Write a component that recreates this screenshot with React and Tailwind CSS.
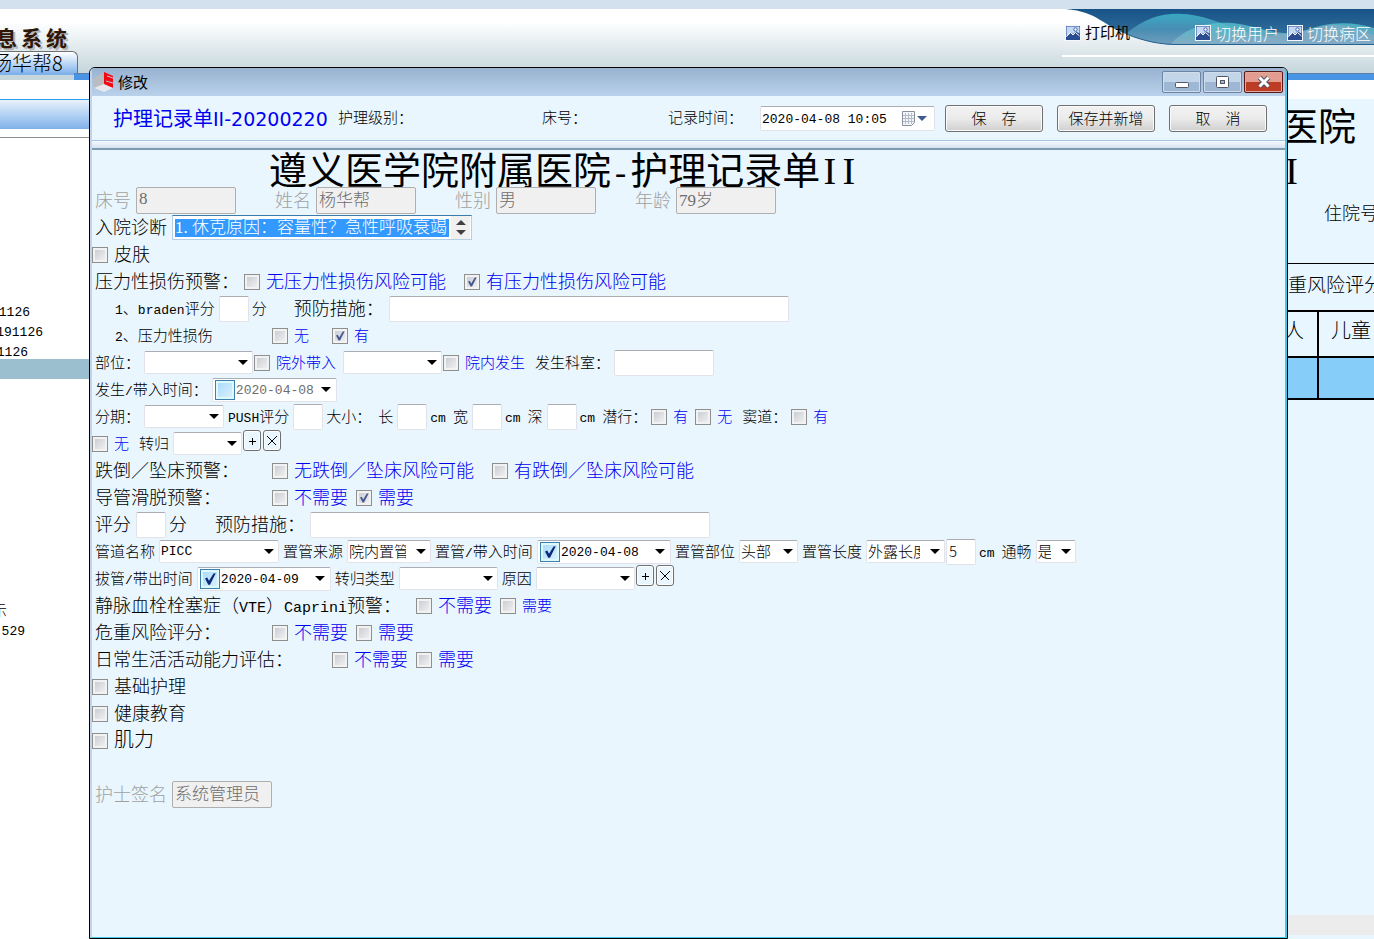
import { useState } from "react";
import clsx from "clsx";

const Mono = ({ children, big }) => (
  <span
    className={clsx(
      "font-['Liberation_Mono',monospace] leading-none",
      big ? "text-[15px]" : "text-[13px]"
    )}
  >
    {children}
  </span>
);

const Row = ({ children, className }) => (
  <div className={clsx("flex h-[27px] items-center whitespace-nowrap", className)}>
    {children}
  </div>
);

const Text = ({ children, big, className, htmlFor }) => {
  const Tag = htmlFor ? "label" : "span";
  return (
    <Tag
      htmlFor={htmlFor}
      className={clsx(
        "shrink-0 pl-[3px]",
        big ? "pr-[5px] pb-[3px] text-lg leading-6" : "pr-1 pb-0.5 text-[15px] leading-6",
        className
      )}
    >
      {children}
    </Tag>
  );
};

const Tick = ({ className }) => (
  <svg viewBox="0 0 16 16" className={clsx("pointer-events-none absolute inset-0", className)}>
    <path d="M4 7.6 L5.8 6.8 L7.2 9.4 L10.8 3.6 L12.6 3.4 L8 12.6 L6.6 12.6 Z" fill="currentColor" />
  </svg>
);

const Check = ({ label, big, checked = false, black, className }) => (
  <label
    className={clsx(
      "flex shrink-0 items-center gap-1.5 leading-6",
      big ? "pr-2 text-lg" : "pr-[7px] text-[15px]",
      black ? "text-black" : "text-[#0000f0]",
      className
    )}
  >
    <span className="relative size-4 shrink-0">
      <input
        type="checkbox"
        defaultChecked={checked}
        className="peer block size-4 appearance-none border border-[#8e8f8f] bg-linear-to-br from-[#c3c7cf] to-[#f6f6f6] shadow-[inset_0_0_0_2px_#f2f2f2]"
      />
      <Tick className="hidden text-[#44588f] peer-checked:block" />
    </span>
    <span className={big ? "pb-[3px]" : "pb-0.5"}>{label}</span>
  </label>
);

const field =
  "block rounded-xs border border-[#e2e3ea] border-t-[#abadb3] bg-white text-black outline-none";

const Input = ({ className, label, id, value = "" }) => (
  <input
    id={id}
    aria-label={label}
    defaultValue={value}
    className={clsx(field, "h-[26px] shrink-0 px-0.5 pb-0.5 text-[15px]", className)}
  />
);

const Locked = ({ id, value }) => (
  <input
    id={id}
    disabled
    defaultValue={value}
    className="h-[27px] w-[100px] shrink-0 rounded-xs border border-[#afafaf] bg-[#f0f0f0] px-0.5 pb-1 font-['Liberation_Serif','Noto_Sans_CJK_SC',serif] text-[17px] font-light text-[#6d6d6d]"
  />
);

const Arrow = ({ className }) => (
  <svg viewBox="0 0 10 5" className={clsx("pointer-events-none h-[5px] w-[10px]", className)}>
    <path d="M0 0h10L5 5z" fill="currentColor" />
  </svg>
);

const Select = ({ className, label, value = "", mono }) => (
  <span className={clsx("relative mr-px block shrink-0", className)}>
    <select
      aria-label={label}
      defaultValue={value}
      className={clsx(
        field,
        "h-[23px] w-full appearance-none pr-6 pl-px leading-5",
        mono ? "font-['Liberation_Mono',monospace] text-[13px]" : "pb-0.5 text-[15px]"
      )}
    >
      <option>{value}</option>
    </select>
    <Arrow className="absolute top-[9px] right-[5px]" />
  </span>
);

const DateBox = ({ className, label, value, checked = false }) => {
  const [on, setOn] = useState(checked);
  return (
    <span className={clsx(field, "mr-px flex h-6 shrink-0 items-center pr-[5px] pl-0.5", className)}>
      <span className="relative size-5 shrink-0">
        <input
          type="checkbox"
          aria-label={`${label}启用`}
          checked={on}
          onChange={() => setOn(!on)}
          className="peer block size-5 appearance-none border border-[#3c7fb1] bg-linear-to-br from-[#a5d8fb] to-[#dff3fe] shadow-[inset_0_0_0_2px_#def9fa]"
        />
        <Tick className="hidden text-[#0c2a7c] peer-checked:block" />
      </span>
      <input
        aria-label={label}
        defaultValue={value}
        className={clsx(
          "h-full w-0 grow pt-0.5 pl-px font-['Liberation_Mono',monospace] text-[13px] outline-none",
          on ? "text-black" : "text-[#6d6d6d]"
        )}
      />
      <Arrow className="shrink-0" />
    </span>
  );
};

const MiniButton = ({ kind }) => (
  <button
    aria-label={kind === "add" ? "添加" : "删除"}
    className="mr-0.5 flex h-[21px] w-[18px] shrink-0 items-center justify-center self-start rounded-[3px] border border-[#707070] bg-[#e9f6fe] shadow-[inset_0_0_0_1px_white]"
  >
    <svg viewBox="0 0 10 10" className="size-2.5" stroke="black" fill="none" shapeRendering="crispEdges">
      {kind === "add" ? <path d="M5.5 2v7M2 5.5h7" /> : <path d="M0.5 0.5l9 9M9.5 0.5l-9 9" />}
    </svg>
  </button>
);

const PushButton = ({ children, className }) => (
  <button
    className={clsx(
      "h-[27px] w-[98px] shrink-0 rounded-[3px] border border-[#707070] bg-linear-to-b from-[#f2f2f2] from-0% via-[#ebebeb] via-50% to-[#cfcfcf] text-[15px] leading-5 whitespace-pre text-black shadow-[inset_0_0_0_1px_#fafafa]",
      className
    )}
  >
    {children}
  </button>
);

const PictureIcon = () => (
  <svg viewBox="0 0 16 16" className="size-4 shrink-0">
    <rect x="0.5" y="0.5" width="15" height="15" fill="#2c4c92" stroke="#f4f7fb" />
    <path d="M1.5 1.5h13v7L11 6.500 8 9 6 7.500 1.500 12z" fill="#c4d8f4" />
    <circle cx="10.500" cy="4.500" r="1.700" fill="#fff" stroke="#3c62ae" />
    <path d="M1.500 11.500L5.500 7.500 8 10l2.500-2.500 4 3.500" fill="none" stroke="#fff" />
  </svg>
);

const HeaderWave = () => (
  <svg viewBox="0 0 308 36" preserveAspectRatio="none" className="absolute top-0 right-0 h-9 w-[308px]">
    <defs>
      <linearGradient id="deep" x1="0" y1="0" x2="0" y2="1">
        <stop offset="0" stopColor="#175387" />
        <stop offset="1" stopColor="#3b7aa5" />
      </linearGradient>
      <linearGradient id="teal" x1="0" y1="0" x2="0" y2="1">
        <stop offset="0" stopColor="#3fb6cb" />
        <stop offset="0.5" stopColor="#4d94b8" />
        <stop offset="1" stopColor="#7ba4c0" />
      </linearGradient>
      <linearGradient id="pale" x1="0" y1="0" x2="0" y2="1">
        <stop offset="0" stopColor="#56c8d2" />
        <stop offset="1" stopColor="#8ab0c6" />
      </linearGradient>
    </defs>
    <path d="M0 0C32 3 38 17 60 25C78 32 94 36 116 36H308V0Z" fill="url(#deep)" />
    <path d="M60 25C80 8 98 4 116 5C150 6 172 28 230 32L308 35V36H116C94 36 78 32 60 25Z" fill="url(#teal)" opacity="0.85" />
    <path d="M104 36C116 22 136 12 166 14C184 15 206 26 232 24C262 12 284 12 308 19V36Z" fill="url(#pale)" opacity="0.75" />
    <path d="M150 36C190 26 230 26 252 18C274 12 292 20 308 26V36Z" fill="#84abc6" opacity="0.7" />
    <path d="M60 25C78 32 94 36 116 35.500H308" fill="none" stroke="#27618f" />
  </svg>
);

const Sidebar = () => (
  <aside className="w-[89px] shrink-0 overflow-hidden bg-white pt-[19px]">
    <div className="h-[30px] border-t border-[#2a9bea] bg-linear-to-b from-[#eaf3fb] to-[#7fb1ea]" />
    <div className="h-[9px] border-b border-[#8c8c8c] bg-white" />
    <ul className="pt-[165px] font-['Liberation_Mono',monospace] text-[13px] leading-5">
      <li className="flex w-[30px] justify-end">1126</li>
      <li className="flex w-[43px] justify-end">191126</li>
      <li className="flex w-7 justify-end">1126</li>
      <li className="-mt-1 h-5 bg-[#9cbfcf]" />
    </ul>
    <ul className="pt-[220px] leading-[22px]">
      <li className="flex w-[7px] justify-end text-[15px] font-light">示</li>
      <li className="flex w-[25px] justify-end font-['Liberation_Mono',monospace] text-[13px]">529</li>
    </ul>
  </aside>
);

const RecordSheet = () => (
  <section className="flex w-[86px] shrink-0 flex-col overflow-hidden bg-[#e8f6ff] whitespace-nowrap">
    <div className="h-[19px] bg-white" />
    <h2 className="flex h-12 items-center justify-end pr-[18px] text-[38px] font-normal">医院</h2>
    <p className="flex h-12 items-center justify-end pr-[76px] font-['Liberation_Serif',serif] text-[38px]">
      I
    </p>
    <p className="h-[68px] pt-[3px] pl-9 text-lg font-light">住院号</p>
    <table className="w-full table-fixed border-collapse text-xl font-light">
      <colgroup>
        <col className="w-[30px]" />
        <col />
      </colgroup>
      <tbody>
        <tr className="h-[47px] border-t border-b-2 border-black">
          <td colSpan={2} className="p-0 pb-1 text-[19px]">重风险评分</td>
        </tr>
        <tr className="h-[46px] border-b-2 border-black align-top">
          <td className="border-r-2 border-black p-0 pt-1">
            <span className="flex w-4 justify-end">人</span>
          </td>
          <td className="p-0 pt-1 pl-3">儿童</td>
        </tr>
        <tr className="h-[42px] border-b-2 border-black bg-[#87cdfa]">
          <td className="border-r-2 border-black p-0" />
          <td className="p-0" />
        </tr>
      </tbody>
    </table>
    <div className="mt-auto mb-1 h-5 bg-[#ececec]" />
  </section>
);

const TitleBar = () => (
  <div className="flex h-[28px] items-center bg-linear-to-b from-[#98b2d0] to-[#b9d1ea] pr-0.5 pl-0.5">
    <svg viewBox="0 0 20 20" className="size-5">
      <path d="M0 6L9 1v12L0 17z" fill="#b9bcc0" />
      <path d="M10 0l9 4v12l-9-3z" fill="#f00a12" />
      <path d="M13 4l6 2M12 9l7 2" stroke="#b9c4d8" strokeWidth="1" />
      <path d="M0 16l10-4 9 4-9 4z" fill="#e6e8ec" />
    </svg>
    <h1 className="grow pl-1 text-[15px] font-normal">修改</h1>
    <div className="flex gap-0.5">
      <button aria-label="最小化" className="flex h-[22px] w-[39px] items-center justify-center rounded-xs border border-[#6d84a3] bg-linear-to-b from-[#c3d5e9] from-50% to-[#9db7d4] to-50% shadow-[inset_0_0_0_1px_#cfdded]">
        <svg viewBox="0 0 14 14" className="size-3.5">
          <rect x="0.5" y="7.500" width="13" height="5" rx="1" fill="#fff" stroke="#535666" />
        </svg>
      </button>
      <button aria-label="最大化" className="flex h-[22px] w-[39px] items-center justify-center rounded-xs border border-[#6d84a3] bg-linear-to-b from-[#c3d5e9] from-50% to-[#9db7d4] to-50% shadow-[inset_0_0_0_1px_#cfdded]">
        <svg viewBox="0 0 14 14" className="size-3.5">
          <rect x="0.5" y="1.500" width="12" height="11" rx="1" fill="#fff" stroke="#535666" />
          <rect x="4.500" y="5.500" width="4" height="3" fill="#9db7d4" stroke="#535666" />
        </svg>
      </button>
      <button aria-label="关闭" className="flex h-[22px] w-[39px] items-center justify-center rounded-xs border border-[#5a1a1a] bg-linear-to-b from-[#e39c90] from-50% to-[#bd3c25] to-50% shadow-[inset_0_0_0_1px_#e3a89c]">
        <svg viewBox="0 0 14 14" className="size-3.5">
          <path d="M2.500 2.500l9 9M11.500 2.500l-9 9" stroke="#535666" strokeWidth="5" />
          <path d="M2.500 2.500l9 9M11.500 2.500l-9 9" stroke="#fff" strokeWidth="3" />
        </svg>
      </button>
    </div>
  </div>
);

const Toolbar = () => (
  <div className="flex h-11 items-center pl-[21px] font-light whitespace-nowrap">
    <h2 className="w-[222px] shrink-0 text-xl font-normal text-[#0000f0]">
      护理记录单<span className="font-['DejaVu_Sans',sans-serif] text-[19px]">II-20200220</span>
    </h2>
    <Text className="w-[204px]">护理级别：</Text>
    <Text className="w-[126px]">床号：</Text>
    <Text className="w-[95px]" htmlFor="recordTime">记录时间：</Text>
    <span className={clsx(field, "flex h-[25px] w-[175px] shrink-0 items-center")}>
      <input
        id="recordTime"
        defaultValue="2020-04-08 10:05"
        className="h-full w-[140px] shrink-0 pt-0.5 pl-px font-['Liberation_Mono',monospace] text-[13px] outline-none"
      />
      <svg viewBox="0 0 15 15" className="size-[15px]">
        <path d="M1.500 0.500h12v11l-3 3h-9z" fill="#f4f5f8" stroke="#8a8f9c" />
        <path d="M2 4.500h11M2 7.500h11M2 10.500h11M4.500 2v11M7.500 2v11M10.500 2v11" stroke="#b4bccb" />
      </svg>
      <Arrow className="ml-px text-[#405a90]" />
    </span>
    <PushButton className="ml-2.5">保　存</PushButton>
    <PushButton className="ml-3.5">保存并新增</PushButton>
    <PushButton className="ml-3.5">取　消</PushButton>
  </div>
);

const patient = [
  { id: "bed", label: "床号", value: "8" },
  { id: "name", label: "姓名", value: "杨华帮" },
  { id: "sex", label: "性别", value: "男" },
  { id: "age", label: "年龄", value: "79岁" },
];

const RecordForm = () => (
  <form className="font-light" onSubmit={(e) => e.preventDefault()}>
    <h2 className="h-[37px] pl-[177px] text-[38px] leading-9 font-normal whitespace-nowrap">
      遵义医学院附属医院
      <span className="font-['Liberation_Mono',monospace] text-[32px] leading-none">-</span>
      护理记录单
      <span className="inline-flex font-['Liberation_Serif',serif] leading-none">
        <span className="w-[19px] text-center">I</span>
        <span className="w-[19px] text-center">I</span>
      </span>
    </h2>

    <Row>
      {patient.map((item) => (
        <div key={item.id} className="flex w-45 items-center">
          <Text big htmlFor={item.id} className="text-[#a0a0a0]">{item.label}</Text>
          <Locked id={item.id} value={item.value} />
        </div>
      ))}
    </Row>

    <Row>
      <Text big htmlFor="diagnosis">入院诊断</Text>
      <span className="flex h-[25px] w-[300px] items-center border border-[#b5cfe7] border-t-[#3d7bad] bg-white pl-0.5">
        <textarea
          id="diagnosis"
          rows={1}
          defaultValue="1. 休克原因：容量性？急性呼吸衰竭"
          className="h-[18px] w-[274px] resize-none overflow-hidden bg-[#3399ff] font-['Liberation_Serif','Noto_Sans_CJK_SC',serif] text-[17px] leading-[18px] whitespace-nowrap text-white outline-none"
        />
        <span className="ml-0.5 flex h-full w-[19px] flex-col items-center justify-between bg-[#f0f0f0] py-1 text-[#404040]">
          <Arrow className="w-[7px] rotate-180" />
          <Arrow className="w-[7px]" />
        </span>
      </span>
    </Row>

    <Row>
      <Check big black label="皮肤" />
    </Row>

    <Row>
      <Text big className="w-38">压力性损伤预警：</Text>
      <Check big label="无压力性损伤风险可能" />
      <Check big checked label="有压力性损伤风险可能" className="ml-2.5" />
    </Row>

    <Row className="pl-5">
      <Text htmlFor="braden">
        <Mono>1</Mono>、<Mono>braden</Mono>评分
      </Text>
      <Input id="braden" className="w-[30px]" />
      <Text>分</Text>
      <Text big htmlFor="pressureCare" className="ml-5">预防措施：</Text>
      <Input id="pressureCare" className="w-[400px]" />
    </Row>

    <Row className="pl-5">
      <Text className="w-40">
        <Mono>2</Mono>、压力性损伤
      </Text>
      <Check label="无" className="w-15" />
      <Check checked label="有" />
    </Row>

    <Row>
      <Text>部位：</Text>
      <Select label="部位" className="w-[109px]" />
      <Check label="院外带入" />
      <Select label="院外带入来源" className="w-[99px]" />
      <Check label="院内发生" />
      <Text htmlFor="dept">发生科室：</Text>
      <Input id="dept" className="w-[100px]" />
    </Row>

    <Row>
      <Text>
        发生<Mono>/</Mono>带入时间：
      </Text>
      <DateBox label="发生/带入时间" value="2020-04-08" className="w-[125px]" />
    </Row>

    <Row>
      <Text>分期：</Text>
      <Select label="分期" className="w-20" />
      <Text htmlFor="push">
        <Mono>PUSH</Mono>评分
      </Text>
      <Input id="push" className="w-[30px]" />
      <Text>大小：</Text>
      <Text htmlFor="len">长</Text>
      <Input id="len" className="w-[30px]" />
      <Text><Mono>cm</Mono></Text>
      <Text htmlFor="wid">宽</Text>
      <Input id="wid" className="w-[30px]" />
      <Text><Mono>cm</Mono></Text>
      <Text htmlFor="dep">深</Text>
      <Input id="dep" className="w-[30px]" />
      <Text><Mono>cm</Mono></Text>
      <Text>潜行：</Text>
      <Check label="有" />
      <Check label="无" />
      <Text>窦道：</Text>
      <Check label="有" />
    </Row>

    <Row>
      <Check label="无" />
      <Text>转归</Text>
      <Select label="转归" className="w-[69px]" />
      <MiniButton kind="add" />
      <MiniButton kind="remove" />
    </Row>

    <Row>
      <Text big className="w-45">跌倒／坠床预警：</Text>
      <Check big label="无跌倒／坠床风险可能" />
      <Check big label="有跌倒／坠床风险可能" className="ml-2.5" />
    </Row>

    <Row>
      <Text big className="w-45">导管滑脱预警：</Text>
      <Check big label="不需要" />
      <Check big checked label="需要" />
    </Row>

    <Row>
      <Text big htmlFor="tubeScore">评分</Text>
      <Input id="tubeScore" className="w-[30px]" />
      <Text big>分</Text>
      <Text big htmlFor="tubeCare" className="ml-5">预防措施：</Text>
      <Input id="tubeCare" className="w-[400px]" />
    </Row>

    <Row>
      <Text>管道名称</Text>
      <Select label="管道名称" value="PICC" mono className="w-[120px]" />
      <Text>置管来源</Text>
      <Select label="置管来源" value="院内置管" className="w-[84px]" />
      <Text>
        置管<Mono>/</Mono>带入时间
      </Text>
      <DateBox checked label="置管/带入时间" value="2020-04-08" className="w-[134px]" />
      <Text>置管部位</Text>
      <Select label="置管部位" value="头部" className="w-[59px]" />
      <Text>置管长度</Text>
      <Select label="置管长度" value="外露长度" className="w-[79px]" />
      <Input label="长度" value="5" className="w-[30px]" />
      <Text><Mono>cm</Mono></Text>
      <Text>通畅</Text>
      <Select label="通畅" value="是" className="w-10" />
    </Row>

    <Row>
      <Text>
        拔管<Mono>/</Mono>带出时间
      </Text>
      <DateBox checked label="拔管/带出时间" value="2020-04-09" className="w-[134px]" />
      <Text>转归类型</Text>
      <Select label="转归类型" className="w-[99px]" />
      <Text>原因</Text>
      <Select label="原因" className="w-[99px]" />
      <MiniButton kind="add" />
      <MiniButton kind="remove" />
    </Row>

    <Row>
      <Text big className="w-81">
        静脉血栓栓塞症（<Mono big>VTE</Mono>）<Mono big>Caprini</Mono>预警：
      </Text>
      <Check big label="不需要" />
      <Check label="需要" />
    </Row>

    <Row>
      <Text big className="w-45">危重风险评分：</Text>
      <Check big label="不需要" />
      <Check big label="需要" />
    </Row>

    <Row>
      <Text big className="w-60">日常生活活动能力评估：</Text>
      <Check big label="不需要" />
      <Check big label="需要" />
    </Row>

    <Row>
      <Check big black label="基础护理" />
    </Row>
    <Row>
      <Check big black label="健康教育" />
    </Row>
    <Row>
      <Check big black label={<span className="text-xl leading-6">肌力</span>} />
    </Row>

    <Row className="mt-[27px]">
      <Text big htmlFor="nurse" className="text-[#a0a0a0]">护士签名</Text>
      <Locked id="nurse" value="系统管理员" />
    </Row>
  </form>
);

export default function App() {
  return (
    <div className="relative flex min-h-screen flex-col overflow-hidden bg-white font-['Noto_Sans_CJK_SC',sans-serif] text-black">
      <div className="h-[9px] bg-[#d3e0ee]" />
      <header className="relative flex h-16 justify-between bg-linear-to-b from-white from-20% to-[#c5d6dc]">
        <HeaderWave />
        <div className="flex w-[89px] flex-col justify-between overflow-hidden whitespace-nowrap">
          <p className="-ml-1 flex gap-1 pt-3.5 text-[21px] leading-7 font-bold text-[#2d1608] [text-shadow:2px_2px_0_#b5b5b5]">
            <span>息</span>
            <span>系</span>
            <span>统</span>
          </p>
          <div className="w-[78px] rounded-tr-md border-t border-r border-[#707070] bg-linear-to-b from-white to-[#7fb1ea]">
            <p className="-ml-2 text-xl leading-[22px] font-light">杨华帮8</p>
          </div>
        </div>
        <nav className="relative flex h-[47px] items-center self-start pr-[3px] text-base whitespace-nowrap">
          <a href="#printer" className="flex items-center gap-1 text-[15px]">
            <PictureIcon />
            打印机
          </a>
          <a href="#user" className="ml-[65px] flex items-center gap-1 font-light text-white">
            <PictureIcon />
            切换用户
          </a>
          <a href="#ward" className="ml-2 flex items-center gap-1 font-light text-white">
            <PictureIcon />
            切换病区
          </a>
        </nav>
        <div className="absolute right-0 bottom-4 h-0.5 w-[312px] bg-white" />
      </header>
      <div className="flex h-[7px]">
        <div className="w-[74px] border-t-2 border-[#7fb1ea] bg-[#c5d6dc]" />
        <div className="grow border-t border-[#5d7fa8] bg-[#4a94e6]" />
      </div>

      <div className="flex grow justify-between">
        <Sidebar />
        <RecordSheet />
      </div>

      {/* edit window */}
      <div
        role="dialog"
        aria-label="修改"
        className="absolute top-[67px] right-[86px] bottom-0 left-[89px] overflow-hidden rounded-t-md border border-black bg-[#e9f6fe]"
      >
        <div className="h-full border-r-2 border-b border-l-2 border-r-[#45c6e6] border-b-[#45c6e6] border-l-[#c3d4ea]">
          <TitleBar />
          <Toolbar />
          <div className="h-[10px] border-t border-b-2 border-t-[#a3c4e3] border-b-[#7c9ab0] bg-linear-to-b from-[#f6f9fd] to-[#d5e2f0]" />
          <RecordForm />
        </div>
      </div>
    </div>
  );
}
